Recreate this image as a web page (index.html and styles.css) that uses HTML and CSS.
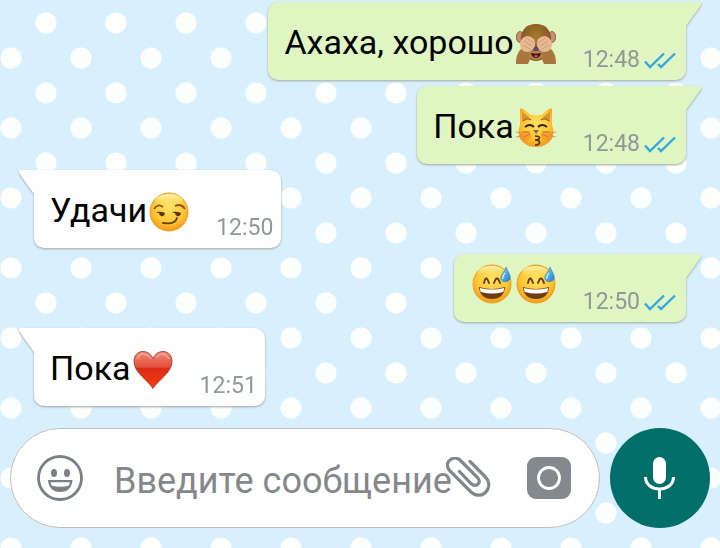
FILE: index.html
```
<!DOCTYPE html>
<html lang="ru">
<head>
    <meta charset="UTF-8">
    <meta name="viewport" content="width=device-width, initial-scale=1.0">
    <title>Чат</title>
    <link rel="stylesheet" href="styles.css">
</head>
<body>
    <!-- Набор иконок -->
    <svg class="sprite" aria-hidden="true">
        <defs>
            <radialGradient id="face" cx="50%" cy="38%" r="62%">
                <stop offset="0" stop-color="#ffe263"/>
                <stop offset="0.65" stop-color="#fdc633"/>
                <stop offset="1" stop-color="#f39a1b"/>
            </radialGradient>
            <linearGradient id="shine" x1="0" y1="0" x2="0" y2="1">
                <stop offset="0" stop-color="#fff6b8"/>
                <stop offset="1" stop-color="#ffdc55" stop-opacity="0"/>
            </linearGradient>
            <linearGradient id="heartFill" x1="0" y1="0" x2="0" y2="1">
                <stop offset="0" stop-color="#ee8a78"/>
                <stop offset="0.42" stop-color="#e2503b"/>
                <stop offset="0.46" stop-color="#dc2c15"/>
                <stop offset="1" stop-color="#f53a12"/>
            </linearGradient>
            <radialGradient id="fur" cx="50%" cy="35%" r="65%">
                <stop offset="0" stop-color="#a9792f"/>
                <stop offset="1" stop-color="#77501e"/>
            </radialGradient>
            <linearGradient id="drop" x1="0" y1="0" x2="1" y2="1">
                <stop offset="0" stop-color="#8fd4f8"/>
                <stop offset="1" stop-color="#1d7fd0"/>
            </linearGradient>
            <symbol id="monkey" viewBox="0 0 40 40">
                <ellipse cx="4" cy="13" rx="3.6" ry="5.5" fill="#c98c78" stroke="#936339"/>
                <ellipse cx="36" cy="13" rx="3.6" ry="5.5" fill="#c98c78" stroke="#936339"/>
                <path d="M20 0C8 0 4 9 5 18c0 10 6 19 15 19s15-9 15-19C36 9 32 0 20 0z" fill="url(#fur)"/>
                <path d="M9 23c3-4 19-4 22 0 2 7-3 13-11 13S7 30 9 23z" fill="#8f6128"/>
                <path d="M5 25c2-3 8-4 11 0 0 6-2 10-4 15H0c0-6 1-11 5-15z" fill="#a9763f"/>
                <path d="M35 25c-2-3-8-4-11 0 0 6 2 10 4 15h12c0-6-1-11-5-15z" fill="#a9763f"/>
                <path d="M14 27c4-2 8-2 12 0l1 6c-4 4-10 4-14 0z" fill="#b58050"/>
                <path d="M16.500 23h7l-1.500 4h-4z" fill="#5a4a68"/>
                <path d="M15 29q5 1.500 10 0-1 5-5 5t-5-5z" fill="#3c100e"/>
                <path d="M17.500 32q2.500-2 5 0-2.500 2.500-5 0z" fill="#e04a55"/>
                <path d="M4 20c0-4 3-7 7-8 4 0 8 3 8 6 1 4-2 9-7 10-5 0-8-3-8-8z" fill="#e8b892"/>
                <path d="M36 20c0-4-3-7-7-8-4 0-8 3-8 6-1 4 2 9 7 10 5 0 8-3 8-8z" fill="#e8b892"/>
                <path d="M8 17l8 5M10 14l8 5M7 21l7 4M32 17l-8 5M30 14l-8 5M33 21l-7 4" stroke="#c8946f" stroke-width="0.8" fill="none"/>
            </symbol>
            <symbol id="cat" viewBox="0 0 40 40">
                <path d="M4 17L4 1q1-1 3 0l8 6h10l8-6q2-1 3 0v16c5 12-4 22-16 22S-1 29 4 17z" fill="url(#face)"/>
                <path d="M6 4l7 5-7 5zM34 4l-7 5 7 5z" fill="#d79332"/>
                <path d="M7 13q4-4 8-1M33 13q-4-4-8-1" stroke="#b8681d" stroke-width="1.300" fill="none"/>
                <ellipse cx="9" cy="28" rx="6" ry="5" fill="#f7892c" opacity="0.6"/>
                <ellipse cx="31" cy="28" rx="6" ry="5" fill="#f7892c" opacity="0.6"/>
                <path d="M9 19q5-4 9 0M22 19q4-4 9 0" stroke="#382114" stroke-width="2" fill="none"/>
                <path d="M17 22h6l-3 4z" fill="#8b6868"/>
                <path d="M19 28c7 0 5 4 0 4 6 0 6 5 0 5" stroke="#553015" stroke-width="1.600" fill="none"/>
                <path d="M14 24l-7 0M14 26l-6 3M26 24h7M26 26l6 3" stroke="#b37129" stroke-width="0.800"/>
                <path d="M5 25l-5-1M5 28l-5 1M35 25l5-1M35 28l5 1" stroke="#c48a44" stroke-width="0.800"/>
            </symbol>
            <symbol id="smirk" viewBox="0 0 40 40">
                <circle cx="20" cy="20" r="19" fill="url(#face)" stroke="#ee9b22"/>
                <ellipse cx="20" cy="9" rx="14" ry="7" fill="url(#shine)"/>
                <path d="M5 17q4-6 9-2M26 14q6-3 10 3" stroke="#885421" stroke-width="1.700" fill="none"/>
                <path d="M7 20q5-1 9 1-1 4-4 3-2-1-2-3-2 0-3-1zM23 20q5-1 9 1-1 4-4 3-2-1-2-3-2 0-3-1z" fill="#593414"/>
                <path d="M14 31q12 2 14-5" stroke="#673d15" stroke-width="1.800" fill="none" stroke-linecap="round"/>
            </symbol>
            <symbol id="sweat" viewBox="0 0 40 40">
                <circle cx="20" cy="20" r="19" fill="url(#face)" stroke="#ee9b22"/>
                <ellipse cx="19" cy="8" rx="13" ry="6" fill="url(#shine)"/>
                <path d="M12 19q2-9 5 0M22 19q3-9 6 0" stroke="#673d15" stroke-width="1.900" fill="none" stroke-linecap="round"/>
                <path d="M7 23q13 4 26 0-1 12-13 12T7 23z" fill="#6f3d12"/>
                <path d="M8 24q12 3 24 0 0 3-1 4-11 3-22 0-1-1-1-4z" fill="#fff"/>
                <path d="M34 3c2 5 5 8 4 12-1 3-8 4-9 0-1-4 4-7 5-12z" fill="url(#drop)" stroke="#2f86c8" stroke-width="0.700"/>
                <path d="M33 9q-3 4-2 6" stroke="#dff5ff" stroke-width="1.200" fill="none"/>
            </symbol>
            <symbol id="heart" viewBox="0 0 40 40">
                <path d="M20 38.500C16 31 1 23 1 11.500 1 5 5 1.500 10 1.500c5 0 8 3 10 7 2-4 5-7 10-7s9 3.500 9 10C39 23 24 31 20 38.500z" fill="url(#heartFill)" stroke="#a34231" stroke-width="0.900"/>
                <path d="M4 9q2-5 7-5 5 1 7 5M23 8q3-4 7-4 4 1 6 5" stroke="#f7b5a5" stroke-width="1.400" fill="none" opacity="0.700"/>
            </symbol>
            <symbol id="ticks" viewBox="0 0 32 17">
                <path d="M1 9.500l5 5.500L20 1.500M14 12l3 3L31 1.500" fill="none" stroke="#35a6e0" stroke-width="2.400"/>
            </symbol>
        </defs>
    </svg>

    <main class="chat">
        <div class="message out">
            <p class="text">Ахаха, хорошо<svg class="emoji" role="img" aria-label="обезьяна"><use href="#monkey"/></svg></p>
            <span class="meta"><time>12:48</time><svg class="ticks" aria-hidden="true"><use href="#ticks"/></svg></span>
        </div>
        <div class="message out">
            <p class="text">Пока<svg class="emoji" role="img" aria-label="кот"><use href="#cat"/></svg></p>
            <span class="meta"><time>12:48</time><svg class="ticks" aria-hidden="true"><use href="#ticks"/></svg></span>
        </div>
        <div class="message in">
            <p class="text">Удачи<svg class="emoji" role="img" aria-label="ухмылка"><use href="#smirk"/></svg></p>
            <span class="meta"><time>12:50</time></span>
        </div>
        <div class="message out only-emoji">
            <p class="text"><svg class="emoji" role="img" aria-label="смех"><use href="#sweat"/></svg><svg class="emoji" role="img" aria-label="смех"><use href="#sweat"/></svg></p>
            <span class="meta"><time>12:50</time><svg class="ticks" aria-hidden="true"><use href="#ticks"/></svg></span>
        </div>
        <div class="message in">
            <p class="text">Пока<svg class="emoji" role="img" aria-label="сердце"><use href="#heart"/></svg></p>
            <span class="meta"><time>12:51</time></span>
        </div>
    </main>

    <form class="composer">
        <div class="field">
            <button type="button" class="icon-button" aria-label="Смайлы">
                <svg width="48" height="48" viewBox="0 0 48 48">
                    <circle cx="24" cy="24" r="21.500" fill="none" stroke="#7b8085" stroke-width="2.800"/>
                    <ellipse cx="18" cy="19" rx="3" ry="4" fill="#7b8085"/>
                    <ellipse cx="31" cy="19" rx="3" ry="4" fill="#7b8085"/>
                    <path d="M12 26h24.500q-1 12-12.200 12T12 26z" fill="#7b8085"/>
                    <path d="M14.500 28.200h19.500l-1 3.300q-8.500 2.500-17.500 0z" fill="#fff"/>
                </svg>
            </button>
            <input type="text" class="input" placeholder="Введите сообщение" aria-label="Введите сообщение">
            <button type="button" class="icon-button attach" aria-label="Прикрепить">
                <svg width="46" height="42" viewBox="0 0 46 42">
                    <path d="M24 4.500L39 19.500C43 23.500 44 29 41 33.500C37 39.500 30 39.500 25 35L4 14C0 9.500 1 5 4 3C7 0.500 11 0.500 14 3L31.500 20.500C36 26 30 31 25 26.500L13.500 14.500" fill="none" stroke="#82878a" stroke-width="3.200" stroke-linecap="round"/>
                </svg>
            </button>
            <button type="button" class="icon-button camera" aria-label="Камера">
                <svg width="44" height="42" viewBox="0 0 44 42">
                    <rect width="44" height="42" rx="9" fill="#84898e"/>
                    <circle cx="22" cy="21" r="10.500" fill="none" stroke="#fff" stroke-width="2.800"/>
                </svg>
            </button>
        </div>
        <button type="button" class="mic" aria-label="Голосовое сообщение">
            <svg width="32" height="44" viewBox="0 0 32 44">
                <rect x="9" y="1" width="13" height="27" rx="6.500" fill="#fff"/>
                <path d="M1.500 21c0 16 28 16 28 0M15.500 33v10" fill="none" stroke="#fff" stroke-width="3"/>
            </svg>
        </button>
    </form>
</body>
</html>
```
FILE: styles.css
```
* {
    box-sizing: border-box;
}
body {
    margin: 0;
    min-height: 100vh;
    display: flex;
    flex-direction: column;
    font-family: Roboto, "Noto Sans", sans-serif;
    background-color: #d8f0fd;
    /* горошек в шахматном порядке */
    background-image:
        radial-gradient(circle at 46px 23px, #fdfffd 10px, transparent 11px),
        radial-gradient(circle at 11px 58px, #fdfffd 10px, transparent 11px);
    background-size: 70px 70px;
}
.sprite {
    position: absolute;
    width: 0;
    height: 0;
}
.chat {
    flex: 1;
    display: flex;
    flex-direction: column;
    gap: 6px;
    padding: 2px 34px 22px;
}
.message {
    position: relative;
    display: flex;
    align-items: flex-end;
    gap: 25px;
    padding: 0 8px 0 16px;
    border-radius: 10px;
    filter: drop-shadow(0 1px 1px #a0a5a0);
}
.message::before {
    content: "";
    position: absolute;
    top: 0;
    width: 26px;
    height: 24px;
}
.in {
    align-self: flex-start;
    background-color: #fefefe;
}
.in::before {
    right: calc(100% - 11px);
    background-color: #fefefe;
    clip-path: polygon(0 0, 100% 0, 100% 100%, 15px 100%, 0 3px);
}
.out {
    align-self: flex-end;
    padding-right: 10px;
    background-color: #dff6c2;
}
.out::before {
    left: calc(100% - 11px);
    background-color: #dff6c2;
    clip-path: polygon(0 0, 100% 0, 100% 3px, 11px 100%, 0 100%);
}
.text {
    margin: 0;
    padding: 17px 0 15px;
    font-size: 34px;
    line-height: 46px;
    color: #000;
}
.only-emoji .text {
    padding: 5px 0 17px;
}
.emoji {
    width: 40px;
    height: 40px;
    margin: 0 2px;
    vertical-align: -10px;
}
.meta {
    display: flex;
    align-items: center;
    gap: 4px;
    padding-bottom: 6px;
    font-size: 23px;
    line-height: 28px;
    color: #929797;
}
.ticks {
    width: 32px;
    height: 17px;
}
.composer {
    display: flex;
    gap: 10px;
    padding: 0 10px 20px;
}
.field {
    flex: 1;
    min-width: 0;
    height: 100px;
    display: flex;
    align-items: center;
    padding: 0 28px 0 25px;
    background-color: #fff;
    border: 1px solid #c5bebb;
    border-radius: 50px;
}
.icon-button {
    flex: none;
    display: flex;
    padding: 0;
    border: none;
    background: none;
    cursor: pointer;
}
.input {
    flex: 1;
    min-width: 0;
    height: 60px;
    margin-left: 30px;
    padding: 6px 0 0;
    border: none;
    outline: none;
    background: none;
    font-family: inherit;
    font-size: 36px;
    color: #000;
}
.input::placeholder {
    color: #84888b;
    opacity: 1;
}
/* скрепка заходит на край текста */
.attach {
    margin-left: -12px;
}
.camera {
    margin-left: 35px;
}
.mic {
    flex: none;
    width: 100px;
    height: 100px;
    display: flex;
    align-items: center;
    justify-content: center;
    padding: 0;
    border: none;
    border-radius: 50%;
    background-color: #006e69;
    cursor: pointer;
}
```
